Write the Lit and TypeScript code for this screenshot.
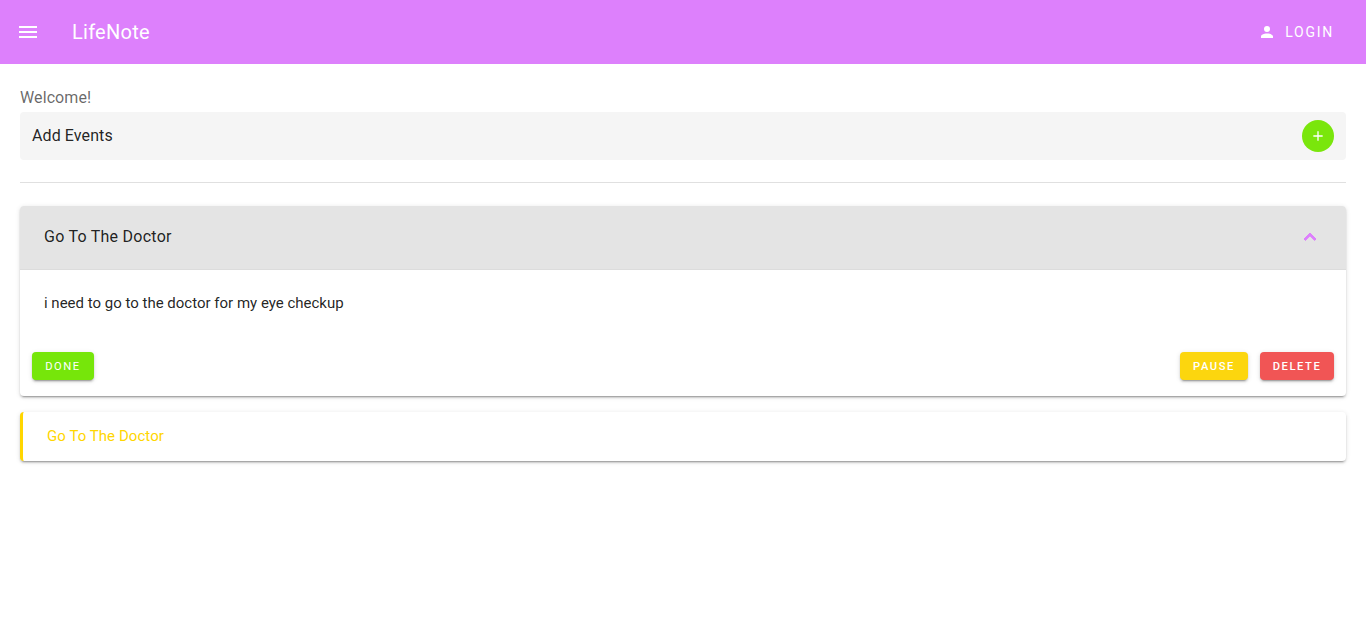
import { LitElement, html, css } from "lit";
import { customElement } from "lit/decorators.js";

@customElement("app-root")
export class AppRoot extends LitElement {
  static styles = css`
    :host { display: block; font-family: Roboto, "Noto Sans", sans-serif; color: rgba(0,0,0,.87); font-size: 16px; min-height: 635px; background: #fff; }
    * { box-sizing: border-box; }
    .bar { height: 64px; background: #dd80fc; color: #fff; display: flex; align-items: center; padding: 0 16px 0 16px; }
    .menu { width: 24px; height: 24px; display: block; fill: #fff; }
    .title { margin-left: 32px; font-size: 20px; font-weight: 400; letter-spacing: 0.25px; line-height: 1; }
    .spacer { flex: 1; }
    .login { display: flex; align-items: center; height: 36px; padding: 0 16px; font-size: 14px; font-weight: 400; letter-spacing: 1.75px; text-transform: uppercase; }
    .login svg { width: 18px; height: 18px; fill: #fff; margin-right: 9.5px; margin-left: -4px; }
    main { padding: 22px 20px 0; }
    .welcome { height: 26px; line-height: 24px; color: rgba(0,0,0,.6); letter-spacing: 0.1px; }
    .add { height: 48px; border-radius: 4px; background: #f5f5f5; display: flex; align-items: center; justify-content: space-between; padding: 0 12px; }
    .add span { letter-spacing: 0.1px; position: relative; top: -1px; }
    .fab { width: 32px; height: 32px; border-radius: 50%; background: #7ae60c; display: flex; align-items: center; justify-content: center; }
    .fab svg { width: 16px; height: 16px; fill: #fff; display: block; }
    hr { border: 0; border-top: 1px solid rgba(0,0,0,.12); margin: 22px 0 23px; }
    .panel { border-radius: 4px; background: #fff; box-shadow: 0 3px 1px -2px rgba(0,0,0,.2), 0 2px 2px 0 rgba(0,0,0,.14), 0 1px 5px 0 rgba(0,0,0,.12); overflow: hidden; }
    .head { height: 64px; background: #e4e4e4; display: flex; align-items: center; justify-content: space-between; padding: 0 24px 2px; border-bottom: 1px solid rgba(0,0,0,.03); letter-spacing: 0.25px; }
    .chev { width: 24px; height: 24px; fill: #dd80fc; stroke: #dd80fc; stroke-width: 1; display: block; }
    .body { padding: 24px 24px 0; height: 82px; font-size: 15px; line-height: 18px; }
    .actions { display: flex; gap: 12px; padding: 0 12px 16px; height: 44px; }
    .btn { height: 28px; border-radius: 4px; color: #fff; font-size: 11.2px; font-weight: 500; letter-spacing: 1.55px; text-transform: uppercase; display: flex; align-items: center; justify-content: center; box-shadow: 0 3px 1px -2px rgba(0,0,0,.2), 0 2px 2px 0 rgba(0,0,0,.14), 0 1px 5px 0 rgba(0,0,0,.12); }
    .done { width: 62px; background: #76e60a; font-weight: 400; margin-right: auto; }
    .pause { width: 68px; background: #fcd60e; }
    .delete { width: 74px; background: #f15555; }
    .second { margin-top: 16px; height: 49px; border-left: 3px solid #ffd600; display: flex; align-items: center; padding: 0 0 2px 24px; color: #ffd600; font-size: 15px; letter-spacing: 0.06px; }
  `;

  render() {
    return html`
      <header class="bar">
        <svg class="menu" viewBox="0 0 24 24"><path d="M3 18h18v-2H3v2zm0-5h18v-2H3v2zm0-7v2h18V6H3z"/></svg>
        <div class="title">LifeNote</div>
        <div class="spacer"></div>
        <div class="login">
          <svg viewBox="0 0 24 24"><path d="M12 4a4 4 0 1 1 0 8 4 4 0 0 1 0-8zm0 10c4.42 0 8 1.79 8 4v2H4v-2c0-2.21 3.58-4 8-4z"/></svg>
          Login
        </div>
      </header>
      <main>
        <div class="welcome">Welcome!</div>
        <div class="add">
          <span>Add Events</span>
          <div class="fab"><svg viewBox="0 0 24 24"><path d="M19 13h-6v6h-2v-6H5v-2h6V5h2v6h6v2z"/></svg></div>
        </div>
        <hr />
        <section class="panel">
          <div class="head">
            <span>Go To The Doctor</span>
            <svg class="chev" viewBox="0 0 24 24"><path d="M7.41 15.41 12 10.83l4.59 4.58L18 14l-6-6-6 6z"/></svg>
          </div>
          <div class="body">i need to go to the doctor for my eye checkup</div>
          <div class="actions">
            <div class="btn done">Done</div>
            <div class="btn pause">Pause</div>
            <div class="btn delete">Delete</div>
          </div>
        </section>
        <section class="panel second">Go To The Doctor</section>
      </main>
    `;
  }
}
